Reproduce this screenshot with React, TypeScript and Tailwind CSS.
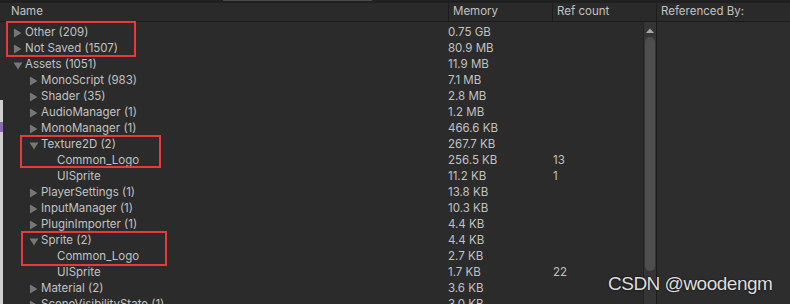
import React from 'react';

type Row = {
  name: string;
  level: number;
  arrow?: 'right' | 'down';
  memory: string;
  refs?: string;
};

const rows: Row[] = [
  { name: 'Other (209)', level: 0, arrow: 'right', memory: '0.75 GB' },
  { name: 'Not Saved (1507)', level: 0, arrow: 'right', memory: '80.9 MB' },
  { name: 'Assets (1051)', level: 0, arrow: 'down', memory: '11.9 MB' },
  { name: 'MonoScript (983)', level: 1, arrow: 'right', memory: '7.1 MB' },
  { name: 'Shader (35)', level: 1, arrow: 'right', memory: '2.8 MB' },
  { name: 'AudioManager (1)', level: 1, arrow: 'right', memory: '1.2 MB' },
  { name: 'MonoManager (1)', level: 1, arrow: 'right', memory: '466.6 KB' },
  { name: 'Texture2D (2)', level: 1, arrow: 'down', memory: '267.7 KB' },
  { name: 'Common_Logo', level: 2, memory: '256.5 KB', refs: '13' },
  { name: 'UISprite', level: 2, memory: '11.2 KB', refs: '1' },
  { name: 'PlayerSettings (1)', level: 1, arrow: 'right', memory: '13.8 KB' },
  { name: 'InputManager (1)', level: 1, arrow: 'right', memory: '10.3 KB' },
  { name: 'PluginImporter (1)', level: 1, arrow: 'right', memory: '4.4 KB' },
  { name: 'Sprite (2)', level: 1, arrow: 'down', memory: '4.4 KB' },
  { name: 'Common_Logo', level: 2, memory: '2.7 KB' },
  { name: 'UISprite', level: 2, memory: '1.7 KB', refs: '22' },
  { name: 'Material (2)', level: 1, arrow: 'right', memory: '3.6 KB' },
  { name: 'SceneVisibilityState (1)', level: 1, arrow: 'right', memory: '3.0 KB' },
];

const indent = ['pl-[13px]', 'pl-[29px]', 'pl-[45px]'];

const Arrow = ({ dir }: { dir?: 'right' | 'down' }) => {
  if (!dir) return <span className="w-[12px] shrink-0" />;
  return (
    <span className="w-[12px] shrink-0 flex items-center">
      {dir === 'right' ? (
        <svg width="9" height="10" viewBox="0 0 9 10">
          <path d="M1 0.5 L8.5 5 L1 9.5 Z" fill="#767676" />
        </svg>
      ) : (
        <svg width="10" height="9" viewBox="0 0 10 9">
          <path d="M0.5 1.5 L9.5 1.5 L5 8.5 Z" fill="#767676" />
        </svg>
      )}
    </span>
  );
};

const App: React.FC = () => {
  return (
    <div
      className="relative w-[790px] h-[304px] overflow-hidden bg-[#2b2b2b] text-[11.5px] text-[#c2c2c2]"
      style={{ fontFamily: 'Inter, "Noto Sans", sans-serif' }}
    >
      {/* top strip */}
      <div className="h-[3px] bg-[#202020] flex">
        <div className="w-[223px]" />
        <div className="w-[149px] h-[1px] bg-[#4a4a4a]" />
      </div>

      <div className="flex h-[301px]">
        {/* list panel */}
        <div className="w-[656px] flex flex-col">
          <div className="h-[19px] flex bg-[#2a2a2a] border-b border-[#1c1c1c]">
            <div className="w-[449px] border-r border-[#1c1c1c] pl-[11px] flex items-center">Name</div>
            <div className="w-[104px] border-r border-[#1c1c1c] pl-[4px] flex items-center">Memory</div>
            <div className="flex-1 pl-[4px] flex items-center">Ref count</div>
          </div>
          <div className="flex flex-1 min-h-0">
            <div className="w-[643px] pt-[3px]">
              {rows.map((r, i) => (
                <div key={i} className="h-[16px] flex items-center whitespace-nowrap">
                  <div className={`w-[448px] flex items-center ${indent[r.level]}`}>
                    <Arrow dir={r.arrow} />
                    <span>{r.name}</span>
                  </div>
                  <div className="w-[105px]">{r.memory}</div>
                  <div>{r.refs}</div>
                </div>
              ))}
            </div>
            {/* scrollbar */}
            <div className="w-[13px] bg-[#353535] border-l border-[#232323] flex flex-col items-center">
              <div className="h-[14px] flex items-center justify-center pt-[2px]">
                <svg width="8" height="5" viewBox="0 0 8 5">
                  <path d="M0 5 L4 0.5 L8 5 Z" fill="#a8a8a8" />
                </svg>
              </div>
              <div className="mt-[1px] w-[10px] h-[234px] rounded-full bg-[#4e4e4e]" />
            </div>
          </div>
        </div>

        {/* referenced by panel */}
        <div className="flex-1 flex flex-col border-l border-[#1c1c1c] bg-[#2d2d2d]">
          <div className="h-[19px] flex items-center pl-[4px] bg-[#2a2a2a] border-b border-[#1c1c1c]">
            Referenced By:
          </div>
          <div className="flex-1" />
        </div>
      </div>

      {/* window behind, peeking at left edge */}
      <div className="absolute left-0 top-[100px] w-[3px] h-[204px] bg-[#cfcfcf]">
        <div className="mt-[22px] h-[10px] bg-[#8a6bb0]" />
      </div>

      {/* red annotation boxes */}
      <div className="absolute left-[6px] top-[21px] w-[130px] h-[36px] border-2 border-[#e83a3a]" />
      <div className="absolute left-[20px] top-[135px] w-[141px] h-[33px] border-2 border-[#e83a3a]" />
      <div className="absolute left-[21px] top-[231px] w-[146px] h-[35px] border-2 border-[#e83a3a]" />

      {/* watermark */}
      <div
        className="absolute left-[608px] top-[270px] text-[19px] tracking-[-0.5px] text-[#dedede]"
        style={{ fontFamily: '"Liberation Sans", Arial, sans-serif', textShadow: '0 0 2px #000' }}
      >
        CSDN @woodengm
      </div>
    </div>
  );
};

export default App;
